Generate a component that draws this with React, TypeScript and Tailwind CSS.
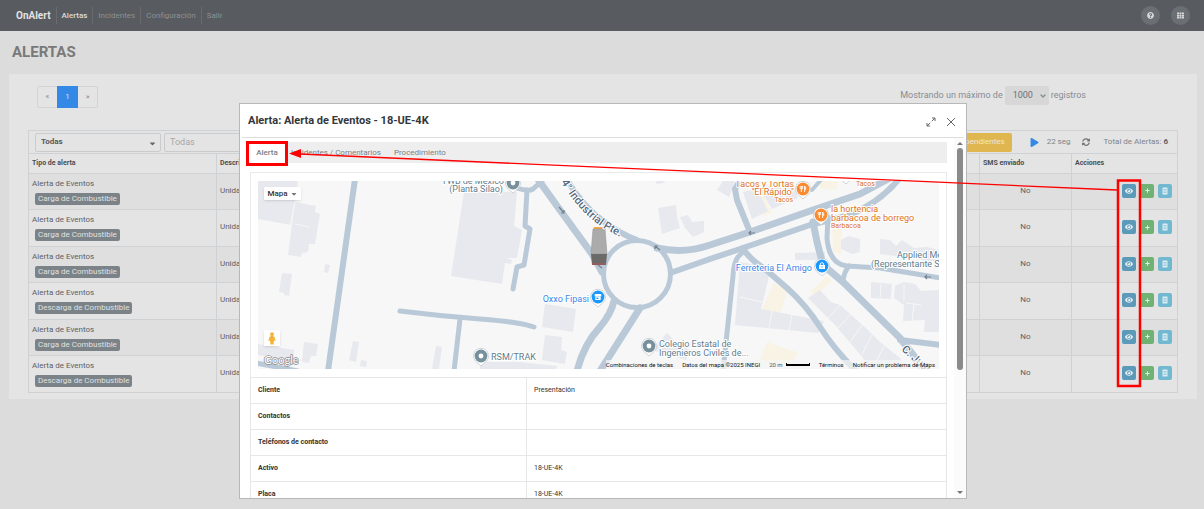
import type { ReactNode } from "react"
import {
  FaCaretDown,
  FaEye,
  FaPlay,
  FaPlus,
  FaQuestionCircle,
  FaSyncAlt,
  FaTh,
} from "react-icons/fa"
import { ChevronDown } from "lucide-react"

interface AlertRow {
  type: string
  tag: string
  description: string
  sms: string
}

const load = "Carga de Combustible"
const unload = "Descarga de Combustible"

const alerts: AlertRow[] = [load, load, load, unload, load, unload].map((tag) => ({
  type: "Alerta de Eventos",
  tag,
  description: "Unidad 18-UE-4K",
  sms: "No",
}))

const details = [
  { label: "Cliente", value: "Presentación" },
  { label: "Contactos", value: "" },
  { label: "Teléfonos de contacto", value: "" },
  { label: "Activo", value: "18-UE-4K" },
  { label: "Placa", value: "18-UE-4K" },
]

const navItems = ["Alertas", "Incidentes", "Configuración", "Salir"]

function Header() {
  return (
    <header className="flex h-[31px] items-center justify-between bg-[#585c60] pr-[14px] pl-4">
      <nav className="flex items-center text-[8px]">
        <a href="#" className="pr-[5px] text-[10px] font-bold text-[#e2e2e2]">
          OnAlert
        </a>
        {navItems.map((item, index) => (
          <a
            key={item}
            href="#"
            className={`flex h-[17px] items-center border-l border-[#686c70] px-[5px] ${
              index === 0 ? "font-medium text-[#dcdcdc]" : "text-[#8d9093]"
            }`}
          >
            {item}
          </a>
        ))}
      </nav>
      <div className="flex gap-[11px] text-[7px] text-[#d8d8d8]">
        <button aria-label="Ayuda" className="flex size-[19px] items-center justify-center rounded-full bg-[#6a6f74]">
          <FaQuestionCircle />
        </button>
        <button aria-label="Aplicaciones" className="flex size-[19px] items-center justify-center rounded-full bg-[#6a6f74]">
          <FaTh />
        </button>
      </div>
    </header>
  )
}

function Toolbar() {
  return (
    <div className="flex items-start justify-between pt-3 pr-[111px] pl-7">
      <div className="flex h-[22px] rounded-xs border border-[#d2d3d4] text-[8px] text-[#888]">
        <button aria-label="Anterior" className="w-[19px]">
          «
        </button>
        <button className="-my-px w-[21px] bg-[#3489e6] text-[#d8e4f2]">1</button>
        <button aria-label="Siguiente" className="w-[19px]">
          »
        </button>
      </div>
      <label className="flex items-center gap-[2px] text-[9px] text-[#878c91]">
        Mostrando un máximo de
        <span className="relative">
          <select className="h-[19px] w-[44px] appearance-none rounded-xs bg-[#d7d7d7] pl-2 text-[9px] text-[#6c7074]">
            <option>1000</option>
          </select>
          <ChevronDown className="pointer-events-none absolute top-[6px] right-[2px] size-2" strokeWidth={4} />
        </span>
        registros
      </label>
    </div>
  )
}

function Filters() {
  return (
    <div className="flex h-[23px] items-center border border-b-0 border-[#cfd2d4] pr-[9px] pl-[6px] text-[8px] text-[#7f8387]">
      <span className="relative">
        <select
          aria-label="Tipo de alerta"
          className="h-[19px] w-[126px] appearance-none rounded-xs border border-[#c9cbcd] pl-[5px] font-bold text-[#56595c]"
        >
          <option>Todas</option>
        </select>
        <FaCaretDown className="pointer-events-none absolute top-[6px] right-[4px] size-[9px] text-[#666]" />
      </span>
      <input
        aria-label="Descripción"
        placeholder="Todas"
        className="ml-[3px] h-[19px] w-[126px] rounded-xs border border-[#c9cbcd] px-[5px] text-[9px] placeholder:text-[#a4a7aa]"
      />
      <button className="ml-auto h-[19px] rounded-xs bg-[#dfb64f] px-[7px] text-[#f1e8d2]">
        Ver alertas pendientes
      </button>
      <button aria-label="Iniciar" className="ml-[18px] text-[#3489e6]">
        <FaPlay className="size-[9px]" />
      </button>
      <span className="ml-[8px]">22 seg</span>
      <button aria-label="Actualizar" className="ml-[12px] text-[#6c7074]">
        <FaSyncAlt className="size-[8px]" />
      </button>
      <span className="ml-[13px]">
        Total de Alertas: <b className="text-[#5c6064]">6</b>
      </span>
    </div>
  )
}

function NotesIcon() {
  return (
    <svg viewBox="0 0 8 8" className="size-2" fill="none">
      <rect x="1.5" y="0.5" width="5" height="7" rx="0.5" fill="#d9edf3" />
      <path d="M2.5 2.500h3M2.500 4h3M2.500 5.500h3" stroke="#72b8d0" strokeWidth="0.6" />
    </svg>
  )
}

function ActionButton({ label, className, children }: { label: string; className: string; children: ReactNode }) {
  return (
    <button
      aria-label={label}
      className={`flex size-[14px] items-center justify-center rounded-xs text-[#e6edf0] ${className}`}
    >
      {children}
    </button>
  )
}

function AlertsTable() {
  return (
    <table className="w-full table-fixed border-collapse text-[8px] text-[#5c6064]">
      <colgroup>
        <col className="w-[188px]" />
        <col />
        <col className="w-[92px]" />
        <col className="w-[106px]" />
      </colgroup>
      <thead>
        <tr className="h-[20px] text-left text-[#4b4e51]">
          {["Tipo de alerta", "Descripción", "SMS enviado", "Acciones"].map((title) => (
            <th key={title} className="border border-[#cfd2d4] px-[3px] py-0 text-[7px] font-bold">
              {title}
            </th>
          ))}
        </tr>
      </thead>
      <tbody>
        {alerts.map((alert, index) => (
          <tr key={index} className="odd:h-[36px] odd:bg-[#dfdfdf] even:h-[37px]">
            <td className="border border-[#cfd2d4] px-[3px] py-0">
              <div className="leading-[10px]">{alert.type}</div>
              <span className="mt-[4px] ml-[3px] inline-block rounded-xs bg-[#7c8388] px-[3px] leading-[12px] text-[#dfe1e2]">
                {alert.tag}
              </span>
            </td>
            <td className="border border-[#cfd2d4] px-[3px] pt-0 pb-[2px]">{alert.description}</td>
            <td className="border border-[#cfd2d4] px-[3px] pt-0 pb-[2px] text-center">{alert.sms}</td>
            <td className="border border-[#cfd2d4] pt-0 pr-[5px] pb-[2px] pl-[3px]">
              <div className="flex justify-end gap-[4px]">
                <ActionButton label="Ver" className="bg-[#5c9ab9]">
                  <FaEye className="size-2" />
                </ActionButton>
                <ActionButton label="Agregar" className="bg-[#70b273]">
                  <FaPlus className="size-[5px]" />
                </ActionButton>
                <ActionButton label="Notas" className="bg-[#72b8d0]">
                  <NotesIcon />
                </ActionButton>
              </div>
            </td>
          </tr>
        ))}
      </tbody>
    </table>
  )
}

const buildings = [
  "258,181 298,181 291,225 258,219",
  "295,202 316,206 315,212 320,214 315,244 309,244 308,252 302,253 301,257 288,255",
  "325,264 330,265 328,273 324,272",
  "282,273 292,274 289,296 284,295 284,293 279,292",
  "258,344 294,350 293,362 258,355",
  "304,342 318,344 316,356 311,356 309,363 302,362",
  "353,341 359,342 356,362 349,360",
  "361,360 367,361 366,367 360,366",
  "436,346 442,347 439,369 432,369",
  "464,192 517,192 514,226 522,230 517,258 507,258 512,260 511,264 505,263 502,284 451,276",
  "658,208 676,205 677,217 680,228 662,234",
  "680,217 688,215 692,222 704,221 704,232 693,237 685,228",
  "655,181 665,181 664,183 657,184",
  "545,304 576,309 573,332 542,327",
  "545,335 562,337 561,350 567,352 565,364 542,360",
  "480,362 520,362 557,366 556,369 480,369",
  "667,333 678,344 690,350 686,360 652,350",
  "717,190 723,181 735,181 729,197",
  "743,192 757,189 768,211 752,219",
  "759,188 779,185 786,203 772,209",
  "781,181 793,183 798,198 788,203",
  "795,253 825,252 825,260 795,260",
  "740,262 770,267 768,281 761,309 824,321 818,333 735,325",
  "808,298 820,290 831,302 840,305 858,321 868,330 880,342 900,358 905,369 872,369 858,352 835,325",
  "841,240 848,236 860,239 860,252 852,254 841,249",
  "880,239 890,240 896,246 902,240 914,248 927,247 939,250 939,262 880,254",
  "871,282 892,284 891,299 871,298",
  "895,286 904,282 915,284 921,291 939,290 939,332 924,332 925,320 903,321 904,305 894,298",
]

const yards = [
  "752,190 760,188 772,213 763,216",
  "832,220 842,221 841,254 833,252",
  "773,283 788,289 780,315 762,310",
  "767,342 799,353 790,365 759,362",
  "810,292 827,276 832,281 815,296",
  "820,181 838,181 836,190 820,188",
]

// [path, stroke width]
const roads: [string, number][] = [
  ["M355 179L328 371", 6],
  ["M400 311Q440 316 480 319T534 327", 5],
  ["M460 319L454 371", 5],
  ["M256 363L298 371", 5],
  ["M537 178L560 210L592 254L602 272", 7],
  ["M517 188Q528 192 533 189L542 181", 5],
  ["M527 190L525 226L530 229L524 265L517 267L513 289", 5],
  ["M566 178Q582 206 603 221Q622 235 637 240", 6],
  ["M657 248Q684 254 710 245L750 232L813 210L860 194L890 178", 7],
  ["M673 272L710 259L740 249L810 225L850 215Q880 202 898 180", 6],
  ["M741 179L735 189L737 200L750 232", 6],
  ["M813 222L817 242L823 265L843 282L900 338L917 360L924 371", 7],
  ["M828 217L827 238Q829 264 847 266L880 268L941 278", 5],
  ["M849 266Q844 272 843 281", 5],
  ["M900 340L941 345", 6],
  ["M743 248Q748 258 765 269L787 288Q806 305 820 327T857 372", 6],
  ["M744 252Q734 256 733 276L723 371", 5],
  ["M614 301Q611 314 600 327Q584 344 577 371", 7],
  ["M640 308L600 371", 7],
]

const arrows = [
  "M559 207l5 6m0-3v3h-3",
  "M660 250l-5-4m0 3v-3h3",
  "M755 233h-6m2-2l-2 2l2 2",
  "M931 277h-6m2-2l-2 2l2 2",
  "M602 268l-4-3",
]

function Pin({ x, y, color, children }: { x: number; y: number; color: string; children: ReactNode }) {
  return (
    <g transform={`translate(${x} ${y})`}>
      <path
        d="M0 -7.6a7.6 7.6 0 0 1 5.6 12.7L0 10L-5.6 5.1A7.6 7.6 0 0 1 0 -7.6z"
        fill="#fff"
        stroke="#b3bac2"
        strokeWidth="0.6"
      />
      <circle r="6.4" fill={color} />
      {children}
    </g>
  )
}

function Fork() {
  return <path d="M-1.6 -3v6M-2.8 -3v2q0 1 1.2 1t1.2-1v-2M1.6 3v-6q1.4 1 1.2 3.4H1.6" fill="none" stroke="#fff" strokeWidth="0.9" />
}

function MapCanvas() {
  return (
    <svg viewBox="258 181 681 188" preserveAspectRatio="xMidYMid slice" className="block h-[188px] w-full bg-[#f7f7f7]">
      {yards.map((points) => (
        <polygon key={points} points={points} fill="#f8f3e4" />
      ))}
      {buildings.map((points) => (
        <polygon key={points} points={points} fill="#e8e9ee" />
      ))}
      <path d="M295 202L290 226M295 224L309 227M840 305L828 318M851 314L838 328M862 325L850 342M872 335L862 354M884 346L874 366M772 311L769 329M792 315L789 330M740 297L762 302M881 284L880 298M906 303L921 305M914 305L912 321M904 284L904 300" stroke="#f7f7f7" strokeWidth="1" />
      <g fill="none" stroke="#bac9d8" strokeLinecap="round" strokeLinejoin="round">
        {roads.map(([d, width]) => (
          <path key={d} d={d} strokeWidth={width} />
        ))}
        <circle cx="637" cy="274" r="33.5" strokeWidth="5" />
        <path d="M812 190L820 181" strokeWidth="4" />
      </g>
      {arrows.map((d) => (
        <path key={d} d={d} fill="none" stroke="#74828f" strokeWidth="1.2" />
      ))}

      <path d="M594 227h11l1 3h-13z" fill="#f0a93c" />
      <path d="M593 229h12l2 25h-16z" fill="#ababab" stroke="#999" strokeWidth="0.6" />
      <path d="M591 254h16l-1 11h-14z" fill="#6c6969" />
      <path d="M592 264h14" stroke="#b9534f" strokeWidth="1" />

      <Pin x={513} y={183} color="#78909c">
        <circle r="2.4" fill="#fff" />
      </Pin>
      <Pin x={481} y={356} color="#78909c">
        <circle r="2.4" fill="#fff" />
      </Pin>
      <Pin x={649} y={346} color="#78909c">
        <circle r="2.4" fill="#fff" />
      </Pin>
      <Pin x={598} y={297} color="#1a98ff">
        <path d="M-3.3 -3h6.6v2.2h-6.6zM-2.7 -0.5h5.4v3.6h-5.4z" fill="#fff" />
        <path d="M-1.6 0.6h2v1.4h-2z" fill="#1a98ff" />
      </Pin>
      <Pin x={846} y={174} color="#f7f7f7">
        <circle r="2.4" fill="#fff" />
      </Pin>
      <Pin x={803} y={189} color="#fb8b30">
        <Fork />
      </Pin>
      <Pin x={821} y={215} color="#fb8b30">
        <Fork />
      </Pin>
      <Pin x={822} y={266} color="#1a98ff">
        <path d="M-3 -1h6v4h-6z" fill="#fff" />
        <path d="M-1.6 -1v-1q0-1.3 1.6-1.3t1.6 1.3v1" fill="none" stroke="#fff" strokeWidth="0.9" />
        <path d="M-1.2 0.4q1.2 1.8 2.4 0" fill="none" stroke="#1a98ff" strokeWidth="0.6" />
      </Pin>

      <g fontSize="9" stroke="#fff" strokeWidth="2" strokeLinejoin="round" paintOrder="stroke">
        <g fill="#5f7d8e">
          <text x="504" y="184" textAnchor="end">TWB de México</text>
          <text x="503" y="192" textAnchor="end">(Planta Silao)</text>
          <text x="491" y="360">RSM/TRAK</text>
          <text x="659" y="347">Colegio Estatal de</text>
          <text x="659" y="356">Ingenieros Civiles de...</text>
          <text x="897" y="258">Applied Medical</text>
          <text x="871" y="267">(Representante Silao)</text>
        </g>
        <g fill="#3b87ea">
          <text x="589" y="302" textAnchor="end">Oxxo Fipasi</text>
          <text x="812" y="271" textAnchor="end">Ferreteria El Amigo</text>
        </g>
        <g fill="#dd7321">
          <text x="794" y="187" textAnchor="end">Tacos y Tortas</text>
          <text x="794" y="195" textAnchor="end">"El Rápido"</text>
          <text x="793" y="202" textAnchor="end" fontSize="7">Tacos</text>
          <text x="856" y="186" fontSize="7">Tacos</text>
          <text x="831" y="212">la hortencia</text>
          <text x="831" y="221">barbacoa de borrego</text>
          <text x="831" y="228" fontSize="7">Barbacoa</text>
        </g>
        <g fill="#56687c" fontWeight="500">
          <path id="pte" d="M561 182Q577 209 598 224Q610 233 632 242" fill="none" stroke="none" />
          <path id="juarez" d="M901 350L934 380" fill="none" stroke="none" />
          <text fontSize="11">
            <textPath href="#pte">4° Industrial Pte.</textPath>
          </text>
          <text fontSize="11">
            <textPath href="#juarez">C. Juárez</textPath>
          </text>
        </g>
        <text x="264" y="364" fontSize="11" fill="#fff" stroke="#8b8b8b" strokeWidth="1.4" fontFamily="Lato, sans-serif">
          Google
        </text>
      </g>
    </svg>
  )
}

function MapView() {
  return (
    <div className="relative overflow-hidden">
      <MapCanvas />
      <button className="absolute top-[6px] left-[6px] flex h-[13px] w-[37px] items-center justify-center gap-[2px] rounded-[1px] bg-white text-[8px] font-medium text-[#333] shadow">
        Mapa
        <FaCaretDown className="size-[8px] text-[#777]" />
      </button>
      <button
        aria-label="Street View"
        className="absolute bottom-[23px] left-[6px] flex size-4 items-center justify-center rounded-[1px] bg-white shadow"
      >
        <svg viewBox="0 0 8 14" className="h-[13px] w-2">
          <circle cx="4" cy="2.5" r="2.1" fill="#f5b53a" />
          <path d="M1.5 4.8h5L8 9.5l-1.2.3-.6-1.5-.5 5.2H2.3l-.5-5.2-.6 1.5L0 9.5z" fill="#f5b53a" />
          <path d="M2.6 4.8h2.8L4 6.2z" fill="#c9802a" />
        </svg>
      </button>
      <div className="absolute right-0 bottom-0 flex h-[9px] items-center gap-[9px] bg-[#f5f5f5]/70 pr-1 text-[6px] leading-[9px] whitespace-nowrap text-[#111]">
        <button>Combinaciones de teclas</button>
        <span>Datos del mapa ©2025 INEGI</span>
        <span className="flex items-center gap-[3px] text-[#555]">
          20 m
          <i className="h-[3px] w-[24px] border border-t-0 border-b-2 border-black" />
        </span>
        <a href="#">Términos</a>
        <a href="#">Notificar un problema de Maps</a>
      </div>
    </div>
  )
}

function Scrollbar() {
  return (
    <div className="flex w-[12px] shrink-0 flex-col items-center bg-[#fbfbfb] py-[4px]">
      <svg viewBox="0 0 6 3" className="mb-[3px] h-[3px] w-[6px]" fill="#777">
        <path d="M0 3L3 0l3 3z" />
      </svg>
      <div className="h-[63%] w-[6px] rounded-full bg-[#8a8a8a]" />
      <svg viewBox="0 0 6 3" className="mt-auto h-[3px] w-[6px]" fill="#777">
        <path d="M0 0l3 3 3-3z" />
      </svg>
    </div>
  )
}

function AlertDialog() {
  return (
    <div className="fixed inset-0 flex justify-center pt-[103px] pb-[10px] pl-[2px]">
      <section
        role="dialog"
        aria-label="Alerta de Eventos"
        className="flex w-full max-w-[728px] flex-col border border-[#b8b8b8] bg-white"
      >
        <header className="mx-[2px] flex h-[34px] shrink-0 items-center justify-between border-b border-[#dedede] pt-[2px] pr-2 pl-[6px]">
          <h2 className="text-[11px] font-bold text-[#33373b]">Alerta: Alerta de Eventos - 18-UE-4K</h2>
          <div className="flex items-center gap-[10px] text-[#666]">
            <button aria-label="Expandir">
              <svg viewBox="0 0 10 10" className="size-[10px]" fill="none" stroke="currentColor">
                <path d="M6 1h3v3M9 1L5.8 4.2M4 9H1V6M1 9l3.200-3.200" />
              </svg>
            </button>
            <button aria-label="Cerrar">
              <svg viewBox="0 0 10 10" className="size-[10px]" fill="none" stroke="currentColor">
                <path d="M1 1l8 8M9 1L1 9" />
              </svg>
            </button>
          </div>
        </header>
        <div className="flex min-h-0 flex-1">
          <div className="ml-[7px] min-w-0 flex-1 overflow-hidden pt-[4px] pb-[2px]">
            <div className="flex h-[21px] items-stretch bg-[#eee] text-[8px] text-[#7a8087]">
              <button className="w-[40px] bg-white font-medium">Alerta</button>
              <button className="ml-[4px]">Incidentes / Comentarios</button>
              <button className="ml-[13px]">Procedimiento</button>
            </div>
            <div className="mt-[9px] ml-[3px]">
              <div className="border border-b-0 border-[#eaeaec] px-[7px] py-2">
                <MapView />
              </div>
              <table className="w-full table-fixed border-collapse text-left text-[7px] text-[#333]">
                <tbody>
                  {details.map((detail) => (
                    <tr key={detail.label} className="h-[26px]">
                      <th className="w-[276px] border border-[#e6e7e9] px-[7px] py-0 font-bold">{detail.label}</th>
                      <td className="border border-[#e6e7e9] px-[7px] py-0">{detail.value}</td>
                    </tr>
                  ))}
                </tbody>
              </table>
            </div>
          </div>
          <div className="flex pl-[7px]">
            <Scrollbar />
          </div>
        </div>
      </section>
    </div>
  )
}

// Marks the view buttons and the tab that they open.
function Callouts() {
  return (
    <svg width="1204" height="509" className="pointer-events-none absolute top-0 left-0" fill="none" stroke="#fe0000">
      <rect x="247.500" y="142.500" width="39" height="22" strokeWidth="3" />
      <rect x="1118" y="180.500" width="22" height="205.500" strokeWidth="2.500" />
      <path d="M1117 190L300 154" strokeWidth="1.300" />
      <path d="M289 153.500l12-4.500v9z" fill="#fe0000" stroke="none" />
    </svg>
  )
}

export default function App() {
  return (
    <div className="min-h-screen bg-[#dcdcdc] font-[Roboto,'Liberation_Sans',sans-serif]">
      <Header />
      <main className="pt-[9px] pr-[7px] pl-[9px]">
        <h1 className="pl-[3px] text-[15px] leading-[24px] font-bold text-[#797979]">ALERTAS</h1>
        <div className="mt-[10px] bg-[#e4e4e4] pb-[6px]">
          <Toolbar />
          <div className="mt-[22px] mr-[19px] ml-[19px]">
            <Filters />
            <AlertsTable />
          </div>
        </div>
      </main>
      <AlertDialog />
      <Callouts />
    </div>
  )
}
